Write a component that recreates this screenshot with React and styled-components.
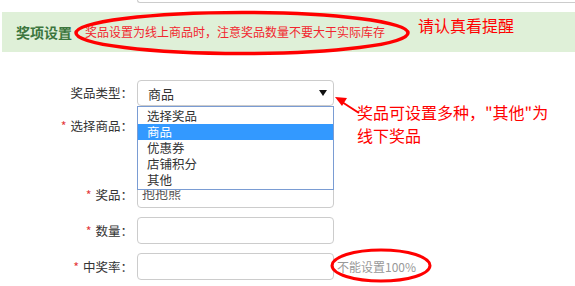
import React from 'react';
import styled, { createGlobalStyle } from 'styled-components';

const GlobalStyle = createGlobalStyle`
    body {
        margin: 0;
        background: #fff;
        font-family: "Noto Sans CJK SC", "Liberation Sans", sans-serif;
        color: #333;
    }
`

const options = ['选择奖品', '商品', '优惠券', '店铺积分', '其他'];

function App() {
    return (
        <Page>
            <GlobalStyle/>
            <PrevInput/>
            <PanelHeading>
                <Title>奖项设置</Title>
                <Notice>奖品设置为线上商品时，注意奖品数量不要大于实际库存</Notice>
                <Hint>请认真看提醒</Hint>
                <Ring width="340" height="46" style={{ left: 70, top: -2 }}>
                    <ellipse cx="170" cy="23" rx="166" ry="20.5" fill="none" stroke="#f00" strokeWidth="3.5"/>
                </Ring>
            </PanelHeading>

            <Form>
                <Row>
                    <Label>奖品类型：</Label>
                    <SelectBox>
                        <span>商品</span>
                        <Caret/>
                        <OptionList>
                            {options.map((o, i) => (
                                <Option key={o} $active={i === 1}>{o}</Option>
                            ))}
                        </OptionList>
                    </SelectBox>
                </Row>
                <Row $tall>
                    <Label $required>选择商品：</Label>
                </Row>
                <Row>
                    <Label $required>奖品：</Label>
                    <Input $pad={4}>抱抱熊</Input>
                </Row>
                <Row>
                    <Label $required>数量：</Label>
                    <Input/>
                </Row>
                <Row>
                    <Label $required>中奖率：</Label>
                    <Input/>
                    <Tip>不能设置100%</Tip>
                </Row>
            </Form>

            <Arrow width="30" height="24" style={{ left: 332, top: 92 }}>
                <line x1="27" y1="21" x2="10" y2="10" stroke="#f00" strokeWidth="2"/>
                <polygon points="3,5 15,6 10,14" fill="#f00"/>
            </Arrow>
            <Callout>
                奖品可设置多种，"其他"为<br/>线下奖品
            </Callout>
            <Ring width="104" height="38" style={{ left: 329, top: 247 }}>
                <ellipse cx="52" cy="18.5" rx="49" ry="15.5" fill="none" stroke="#f00" strokeWidth="3"/>
            </Ring>
        </Page>
    )
}

const Page = styled.div`
    position: relative;
    width: 575px;
    height: 286px;
    overflow: hidden;
`
const PrevInput = styled.div`
    margin-left: 137px;
    height: 2px;
    border-left: 1px solid #ccc;
    border-bottom: 1px solid #ccc;
    border-bottom-left-radius: 4px;
`
const PanelHeading = styled.div`
    position: relative;
    display: flex;
    align-items: center;
    margin: 9px 0 0 2px;
    height: 40px;
    padding-left: 14px;
    background: #dff0d8;
`
const Title = styled.h3`
    margin: 0;
    font-size: 14px;
    font-weight: bold;
    line-height: 20px;
    color: #3c763d;
`
const Notice = styled.span`
    margin-left: 13px;
    font-size: 12px;
    line-height: 16px;
    color: #f2262f;
`
const Hint = styled.span`
    align-self: flex-start;
    margin: 2px 0 0 33px;
    font-size: 16px;
    line-height: 22px;
    color: #f00;
`
const Ring = styled.svg`
    position: absolute;
    pointer-events: none;
`
const Arrow = styled.svg`
    position: absolute;
`
const Callout = styled.div`
    position: absolute;
    left: 357px;
    top: 101px;
    font-size: 16px;
    line-height: 23px;
    color: #f00;
`
const Form = styled.div`
    display: flex;
    flex-direction: column;
    gap: 9px;
    margin-top: 28px;
`
const Row = styled.div`
    display: flex;
    align-items: ${p => (p.$tall ? 'flex-start' : 'center')};
    height: ${p => (p.$tall ? '57px' : 'auto')};
`
const Label = styled.label`
    width: 133px;
    padding-right: 4px;
    text-align: right;
    font-size: 12.5px;
    line-height: 22px;
    color: #333;
    &::before {
        content: ${p => (p.$required ? '"*"' : 'none')};
        color: #e4393c;
        margin-right: 4px;
    }
`
const SelectBox = styled.div`
    position: relative;
    box-sizing: border-box;
    display: flex;
    align-items: center;
    justify-content: space-between;
    width: 197px;
    height: 26px;
    padding: 0 6px 0 10px;
    border: 1px solid #ccc;
    border-radius: 4px;
    font-size: 13px;
    color: #333;
`
const Caret = styled.i`
    width: 0;
    height: 0;
    border-left: 4px solid transparent;
    border-right: 4px solid transparent;
    border-top: 6px solid #111;
`
const OptionList = styled.ul`
    position: absolute;
    left: -1px;
    top: 25px;
    z-index: 2;
    box-sizing: border-box;
    width: 197px;
    margin: 0;
    padding: 1px 0;
    list-style: none;
    background: #fff;
    border: 1px solid #7a9cd3;
`
const Option = styled.li`
    height: 16px;
    padding-left: 9px;
    font-size: 12.5px;
    line-height: 16px;
    background: ${p => (p.$active ? '#3399ff' : '#fff')};
    color: ${p => (p.$active ? '#fff' : '#333')};
`
const Input = styled.div`
    box-sizing: border-box;
    width: 197px;
    height: 27px;
    padding: 0 ${p => p.$pad ?? 10}px;
    border: 1px solid #ccc;
    border-radius: 4px;
    font-size: 13px;
    line-height: 22px;
    color: #555;
`
const Tip = styled.span`
    margin-left: 3px;
    font-size: 12px;
    color: #999;
`

export default App;
